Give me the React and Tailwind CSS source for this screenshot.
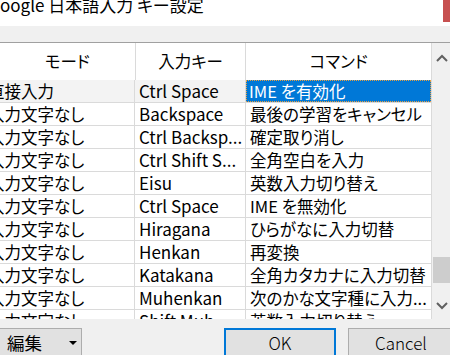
const rows = [
  ['直接入力', 'Ctrl Space', 'IME を有効化'],
  ['入力文字なし', 'Backspace', '最後の学習をキャンセル'],
  ['入力文字なし', 'Ctrl Backsp...', '確定取り消し'],
  ['入力文字なし', 'Ctrl Shift S...', '全角空白を入力'],
  ['入力文字なし', 'Eisu', '英数入力切り替え'],
  ['入力文字なし', 'Ctrl Space', 'IME を無効化'],
  ['入力文字なし', 'Hiragana', 'ひらがなに入力切替'],
  ['入力文字なし', 'Henkan', '再変換'],
  ['入力文字なし', 'Katakana', '全角カタカナに入力切替'],
  ['入力文字なし', 'Muhenkan', '次のかな文字種に入力...'],
  ['入力文字なし', 'Shift Muh...', '英数入力切り替え'],
];

function Chevron({ up }) {
  return (
    <svg width="12" height="8" viewBox="0 0 12 8">
      <path
        d={up ? 'M1 7 L6 2 L11 7' : 'M1 1 L6 6 L11 1'}
        fill="none"
        stroke="#606060"
        strokeWidth="2"
      />
    </svg>
  );
}

export default function App() {
  const font = { fontFamily: '"Noto Sans CJK JP", "Noto Sans", sans-serif', fontFeatureSettings: '"palt"' };

  return (
    <div className="w-[450px] h-[355px] overflow-hidden bg-white text-black relative flex flex-col" style={font}>
      {/* title bar */}
      <div className="h-[26px] shrink-0 bg-white overflow-hidden">
        <div className="text-[17px] leading-[20px] -mt-[5px] whitespace-nowrap">oogle 日本語入力 キー設定</div>
      </div>
      <div className="absolute top-0 right-0 w-[7px] h-[22px] bg-[#c75050]"></div>

      <div className="h-[16px] shrink-0 bg-[#f0f0f0] border-b border-[#a0a0a0] box-content"></div>

      {/* table + scrollbar */}
      <div className="flex h-[276px] shrink-0 overflow-hidden">
        <div className="w-[432px] flex flex-col">
          <div className="flex h-[37px] shrink-0 bg-white text-[16.5px]">
            <div className="w-[135px] border-r border-[#dadada] flex items-center justify-center -ml-[16px] pl-[16px] box-content">モード</div>
            <div className="w-[111px] border-r border-[#dadada] flex items-center justify-center">入力キー</div>
            <div className="w-[186px] border-r border-[#dadada] flex items-center justify-center">コマンド</div>
          </div>
          {rows.map((r, i) => (
            <div
              key={i}
              className={`flex h-[23px] shrink-0 border-b border-[#dadada] text-[16.5px] leading-[22px] ${i === 0 ? 'bg-[#f3f3f3]' : 'bg-white'}`}
            >
              <div className="w-[135px] border-r border-[#dadada] overflow-hidden whitespace-nowrap">
                <span className="block -ml-[12px]">{r[0]}</span>
              </div>
              <div className="w-[111px] border-r border-[#dadada] overflow-hidden whitespace-nowrap pl-[4px] text-[17px]">{r[1]}</div>
              {i === 0 ? (
                <div className="w-[186px] border-r border-[#dadada] overflow-hidden whitespace-nowrap">
                  <div className="h-[22px] bg-[#0078d7] text-white pl-[3px] outline-1 outline-dotted outline-[#e8a040] -outline-offset-1">{r[2]}</div>
                </div>
              ) : (
                <div className="w-[186px] border-r border-[#dadada] overflow-hidden whitespace-nowrap pl-[4px]">{r[2]}</div>
              )}
            </div>
          ))}
        </div>
        <div className="w-[18px] bg-[#f0f0f0] flex flex-col">
          <div className="h-[30px] flex items-center justify-center pl-[1px]">
            <Chevron up />
          </div>
          <div className="h-[184px]"></div>
          <div className="h-[26px] w-[17px] ml-[1px] bg-[#cdcdcd]"></div>
          <div className="h-[36px] flex items-center justify-center pl-[1px] pt-[10px]">
            <Chevron />
          </div>
        </div>
      </div>

      {/* bottom buttons */}
      <div className="flex-1 bg-[#f0f0f0]">
        <div className="flex items-start pt-[9px] h-full">
          <div className="w-[98px] -ml-[16px] h-[30px] shrink-0 border border-[#adadad] bg-[#e1e1e1] flex items-center pl-[22px] text-[17.5px] leading-none">
            <span>編集</span>
            <span className="ml-auto mr-[4px] w-0 h-0 border-l-[4px] border-r-[4px] border-t-[4px] border-l-transparent border-r-transparent border-t-black"></span>
          </div>
          <div className="ml-[142px] w-[112px] h-[30px] shrink-0 border-2 border-[#0078d7] bg-[#e1e1e1] flex items-center justify-center text-[17px] font-light leading-none pb-[2px]">OK</div>
          <div className="ml-[12px] w-[110px] h-[30px] shrink-0 border border-[#adadad] bg-[#e1e1e1] flex items-center justify-center text-[17px] font-light leading-none pb-[2px] pr-[4px]">Cancel</div>
        </div>
      </div>
    </div>
  );
}
